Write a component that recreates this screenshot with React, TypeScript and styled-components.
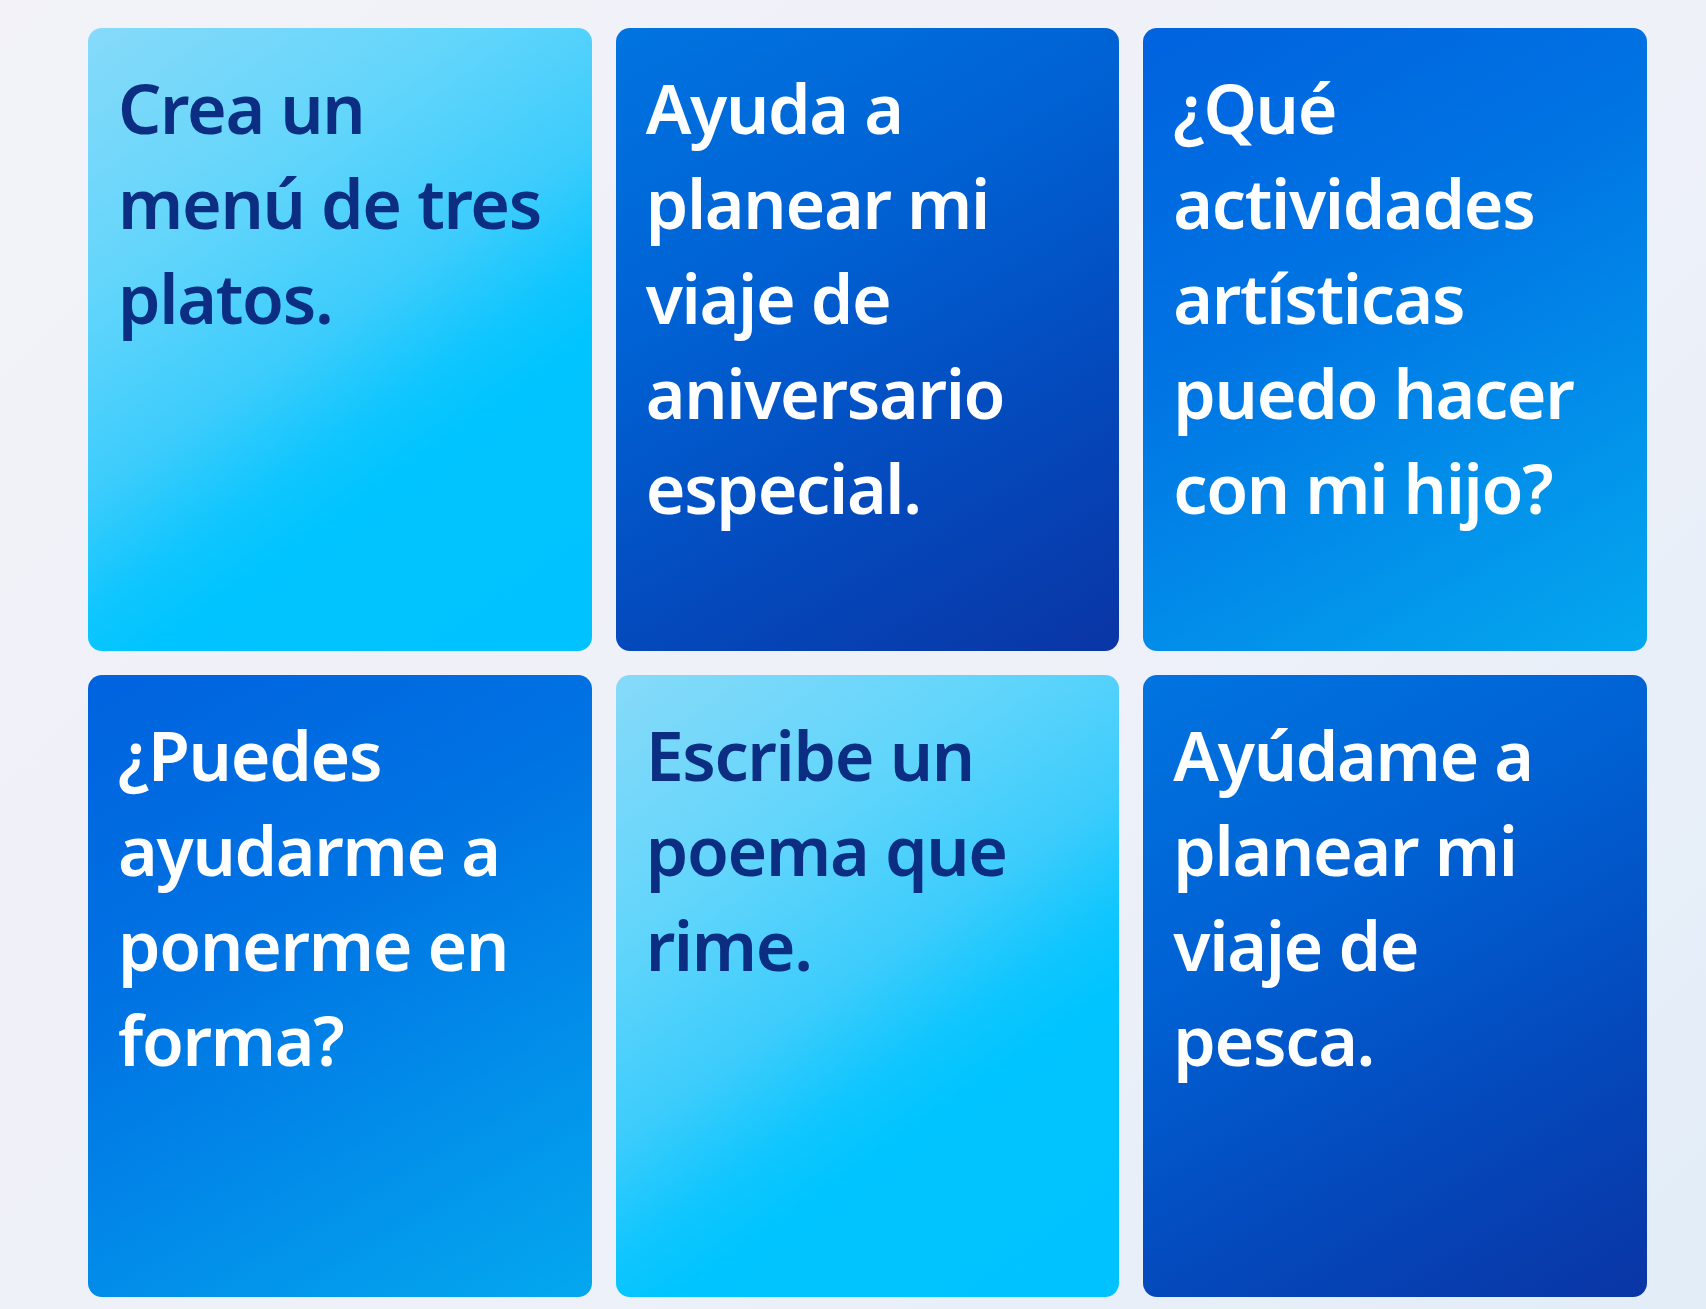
import * as React from 'react';
import styled, { createGlobalStyle, css } from 'styled-components';

export enum Tone {
  SKY = 'sky',
  DEEP = 'deep',
  BRIGHT = 'bright'
}

const GlobalStyle = createGlobalStyle`
  html, body {
    margin: 0;
    padding: 0;
  }
  body {
    background: linear-gradient(135deg, #f2f2f8 0%, #eff1f8 55%, #e2edf8 100%);
    min-height: 100vh;
    font-family: "Noto Sans", "Open Sans", sans-serif;
  }
`;

const Page = styled.main`
  box-sizing: border-box;
  width: 1706px;
  height: 1309px;
  padding: 28px 59px 12px 88px;
  background: linear-gradient(135deg, #f2f2f8 0%, #eff1f8 55%, #e2edf8 100%);
`;

const Grid = styled.div`
  display: grid;
  grid-template-columns: repeat(3, 1fr);
  grid-template-rows: repeat(2, 1fr);
  gap: 24px;
  height: 100%;
`;

const tones = {
  [Tone.SKY]: css`
    background: linear-gradient(145deg, #86daf9 0%, #62d5fb 28%, #3cccfc 48%, #10c6fe 60%, #00c4ff 68%, #00c2fe 100%);
    color: #0b2e82;
  `,
  [Tone.DEEP]: css`
    background: linear-gradient(150deg, #0074e0 0%, #0062d4 35%, #0448bb 70%, #0a35a5 100%);
    color: #ffffff;
  `,
  [Tone.BRIGHT]: css`
    background: linear-gradient(150deg, #0062df 0%, #0074e3 40%, #0290ea 72%, #04a8ef 100%);
    color: #ffffff;
  `
};

const Card = styled.div<{ $tone: Tone }>`
  box-sizing: border-box;
  display: flex;
  flex-direction: column;
  align-items: flex-start;
  border-radius: 14px;
  padding: 32px 30px;
  cursor: pointer;
  font-family: "Noto Sans", "Open Sans", sans-serif;
  font-size: 68px;
  font-weight: 600;
  line-height: 95px;
  letter-spacing: -1.3px;
  ${(p) => tones[p.$tone]}
`;

const Prompt = styled.span`
  display: block;
  max-width: 436px;
`;

const prompts: { text: string; tone: Tone }[] = [
  { text: 'Crea un menú de tres platos.', tone: Tone.SKY },
  { text: 'Ayuda a planear mi viaje de aniversario especial.', tone: Tone.DEEP },
  { text: '¿Qué actividades artísticas puedo hacer con mi hijo?', tone: Tone.BRIGHT },
  { text: '¿Puedes ayudarme a ponerme en forma?', tone: Tone.BRIGHT },
  { text: 'Escribe un poema que rime.', tone: Tone.SKY },
  { text: 'Ayúdame a planear mi viaje de pesca.', tone: Tone.DEEP }
];

const App = () => (
  <>
    <GlobalStyle />
    <Page>
      <Grid>
        {prompts.map((p) => (
          <Card key={p.text} $tone={p.tone} role="button">
            <Prompt>{p.text}</Prompt>
          </Card>
        ))}
      </Grid>
    </Page>
  </>
);

export default App;
